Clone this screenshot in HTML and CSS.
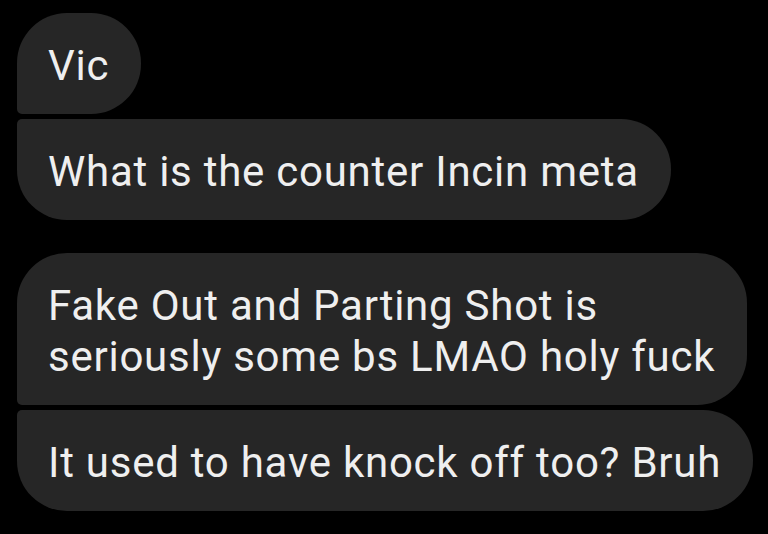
FILE: index.html
```html
<!DOCTYPE html>
<html>
<head>
<meta charset="utf-8">
<link rel="stylesheet" href="styles.css">
</head>
<body>
<div class="thread">
  <div class="group">
    <div class="bubble first">Vic</div>
    <div class="bubble last">What is the counter Incin meta</div>
  </div>
  <div class="group">
    <div class="bubble first">Fake Out and Parting Shot is<br>seriously some bs LMAO holy fuck</div>
    <div class="bubble last">It used to have knock off too? Bruh</div>
  </div>
</div>
</body>
</html>
```
FILE: styles.css
```css
html, body {
  margin: 0;
  background: #000;
}
body {
  width: 768px;
  height: 534px;
  overflow: hidden;
}
.thread {
  display: flex;
  flex-direction: column;
  gap: 33px;
  padding: 13px 0 0 17px;
}
.group {
  display: flex;
  flex-direction: column;
  align-items: flex-start;
  gap: 5px;
}
.bubble {
  background: #262626;
  color: #efefef;
  font-family: Roboto, "Noto Sans", sans-serif;
  font-size: 42px;
  letter-spacing: 0.75px;
  line-height: 51px;
  padding: 27px 32px 23px 31px;
  border-radius: 50px;
  white-space: nowrap;
}
.bubble.first {
  border-bottom-left-radius: 5px;
}
.bubble.last {
  border-top-left-radius: 5px;
}
```
